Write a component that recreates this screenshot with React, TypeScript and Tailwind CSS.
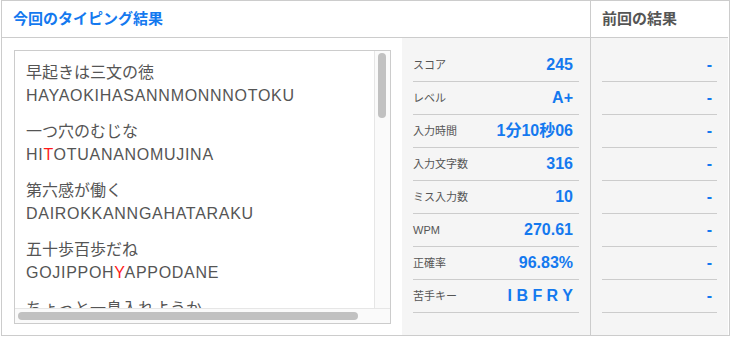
const phrases = [
  { jp: '早起きは三文の徳', romaji: 'HAYAOKIHASANNMONNNOTOKU', miss: [] as number[] },
  { jp: '一つ穴のむじな', romaji: 'HITOTUANANOMUJINA', miss: [2] },
  { jp: '第六感が働く', romaji: 'DAIROKKANNGAHATARAKU', miss: [] as number[] },
  { jp: '五十歩百歩だね', romaji: 'GOJIPPOHYAPPODANE', miss: [8] },
  { jp: 'ちょっと一息入れようか', romaji: '', miss: [] as number[] },
];

const stats = [
  { label: 'スコア', value: '245' },
  { label: 'レベル', value: 'A+' },
  { label: '入力時間', value: '1分10秒06' },
  { label: '入力文字数', value: '316' },
  { label: 'ミス入力数', value: '10' },
  { label: 'WPM', value: '270.61' },
  { label: '正確率', value: '96.83%' },
  { label: '苦手キー', value: 'I B F R Y' },
];

function Romaji({ text, miss }: { text: string; miss: number[] }) {
  return (
    <div className="tracking-[0.7px]">
      {text.split('').map((ch, i) => (
        <span key={i} className={miss.includes(i) ? 'text-[#ff1a1a]' : ''}>
          {ch}
        </span>
      ))}
    </div>
  );
}

export default function App() {
  return (
    <div
      className="ml-[1px] flex h-[336px] w-[729px] overflow-hidden border border-[#cccccc] bg-white text-[#555]"
      style={{ fontFamily: '"Liberation Sans", "Noto Sans CJK JP", sans-serif' }}
    >
      {/* This time */}
      <div className="flex min-h-0 w-[588px] shrink-0 flex-col">
        <div className="flex h-[37px] shrink-0 items-center border-b border-[#cccccc] pl-[11px] text-[15px] font-bold text-[#1479ef]">
          今回のタイピング結果
        </div>
        <div className="flex min-h-0 flex-1">
          <div className="w-[400px] shrink-0 pb-[11px] pl-[12px] pr-[11px] pt-[12px]">
            <div className="flex h-full flex-col overflow-hidden border border-[#cccccc]">
              <div className="flex min-h-0 flex-1">
                <div className="min-h-0 flex-1 overflow-hidden pl-[11px] pt-[10px] text-[16px] leading-[23px] text-[#555]">
                  {phrases.map((p) => (
                    <div key={p.jp} className="mb-[13px]">
                      <div>{p.jp}</div>
                      {p.romaji && <Romaji text={p.romaji} miss={p.miss} />}
                    </div>
                  ))}
                </div>
                <div className="w-[16px] shrink-0 border-l border-[#e6e6e6] bg-[#fafafa] pl-[3px] pt-[2px]">
                  <div className="h-[65px] w-[8px] rounded-full bg-[#c1c1c1]" />
                </div>
              </div>
              <div className="h-[15px] shrink-0 border-t border-[#e6e6e6] bg-[#fafafa] pl-[3px] pt-[3px]">
                <div className="h-[8px] w-[340px] rounded-full bg-[#c1c1c1]" />
              </div>
            </div>
          </div>
          <div className="w-[188px] shrink-0 bg-[#f5f5f5] px-[11px] pt-[11px]">
            {stats.map((s) => (
              <div
                key={s.label}
                className="flex h-[33px] items-center justify-between border-b border-[#cccccc] pr-[6px]"
              >
                <span className="text-[11px] text-[#555]">{s.label}</span>
                <span className="whitespace-pre text-[16px] font-bold text-[#1479ef]">{s.value}</span>
              </div>
            ))}
          </div>
        </div>
      </div>

      {/* Previous */}
      <div className="flex w-[138px] shrink-0 flex-col border-l border-[#cccccc]">
        <div className="flex h-[37px] shrink-0 items-center border-b border-[#cccccc] pl-[11px] text-[15px] font-bold text-[#555]">
          前回の結果
        </div>
        <div className="flex-1 bg-[#f5f5f5] px-[11px] pt-[11px]">
          {stats.map((s) => (
            <div
              key={s.label}
              className="flex h-[33px] items-center justify-end border-b border-[#cccccc] pr-[5px] text-[16px] font-bold text-[#1479ef]"
            >
              -
            </div>
          ))}
        </div>
      </div>
    </div>
  );
}
